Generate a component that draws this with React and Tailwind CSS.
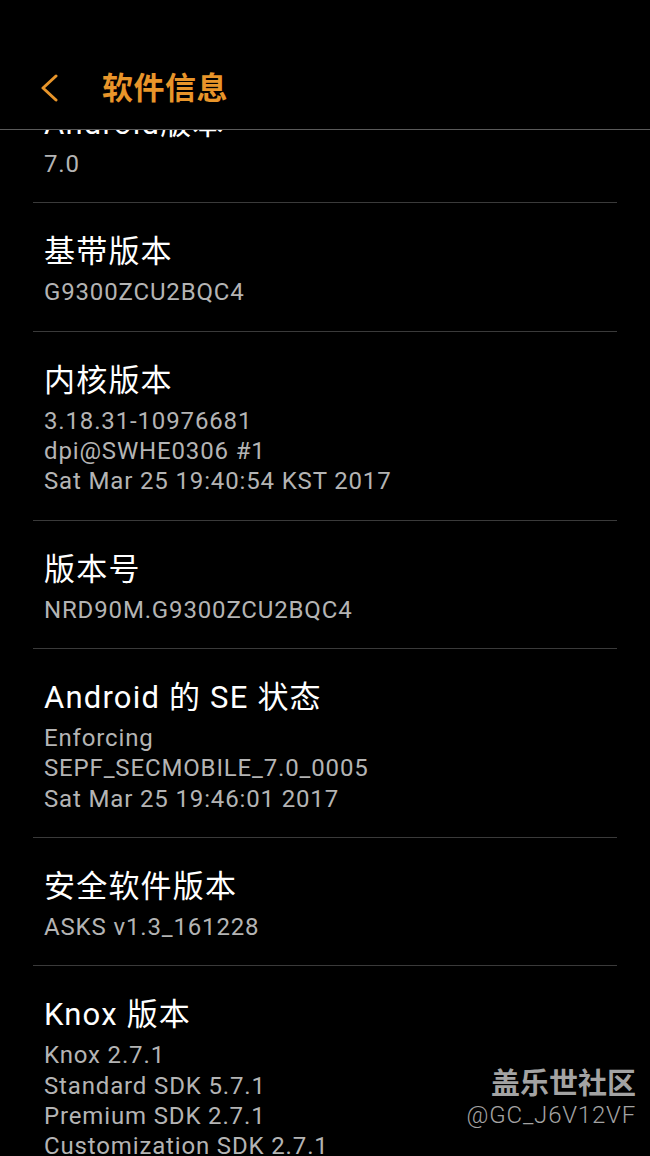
import React from "react";

const items = [
  { title: "Android版本", values: ["7.0"] },
  { title: "基带版本", values: ["G9300ZCU2BQC4"] },
  { title: "内核版本", values: ["3.18.31-10976681", "dpi@SWHE0306 #1", "Sat Mar 25 19:40:54 KST 2017"] },
  { title: "版本号", values: ["NRD90M.G9300ZCU2BQC4"] },
  { title: "Android 的 SE 状态", values: ["Enforcing", "SEPF_SECMOBILE_7.0_0005", "Sat Mar 25 19:46:01 2017"] },
  { title: "安全软件版本", values: ["ASKS v1.3_161228"] },
  { title: "Knox 版本", values: ["Knox 2.7.1", "Standard SDK 5.7.1", "Premium SDK 2.7.1", "Customization SDK 2.7.1"] },
];

const font = { fontFamily: 'Roboto, "Noto Sans CJK SC", sans-serif' };

export default function App() {
  return (
    <div className="relative w-[650px] h-[1156px] bg-black overflow-hidden" style={font}>
      <div className="relative z-10 h-[130px] bg-black border-b border-[#5a5a5a] flex items-center pt-[47px]">
        <svg className="ml-[38px]" width="22" height="28" viewBox="0 0 22 28" fill="none">
          <path d="M18 2 L5 14 L18 26" stroke="#e8952a" strokeWidth="3" strokeLinecap="round" strokeLinejoin="round" />
        </svg>
        <span className="ml-[42px] text-[31px] font-semibold tracking-[0.5px] text-[#e8952a] leading-none">软件信息</span>
      </div>
      <div className="px-[33px] -mt-[55px]">
        {items.map((it, i) => (
          <div key={i} className={i < items.length - 1 ? "border-b border-[#3a3a3a]" : ""}>
            <div className="pl-[11px] pt-[29px] pb-[23px]">
              <div className="text-[31px] leading-[40px] tracking-[1.2px] text-white">{it.title}</div>
              <div className="pt-[5px]">
                {it.values.map((v, j) => (
                  <div key={j} className="text-[24px] leading-[30.33px] tracking-[0.85px] text-[#b4b4b4]">{v}</div>
                ))}
              </div>
            </div>
          </div>
        ))}
      </div>
      <div className="absolute right-[14px] top-[1063px] flex flex-col items-end">
        <div className="text-[29px] leading-[37px] font-bold text-[#a3a3a3]" style={{ fontFamily: '"Noto Sans CJK SC", sans-serif' }}>盖乐世社区</div>
        <div className="text-[24px] leading-[30px] tracking-[0.8px] text-[#a3a3a3] font-light">@GC_J6V12VF</div>
      </div>
    </div>
  );
}
